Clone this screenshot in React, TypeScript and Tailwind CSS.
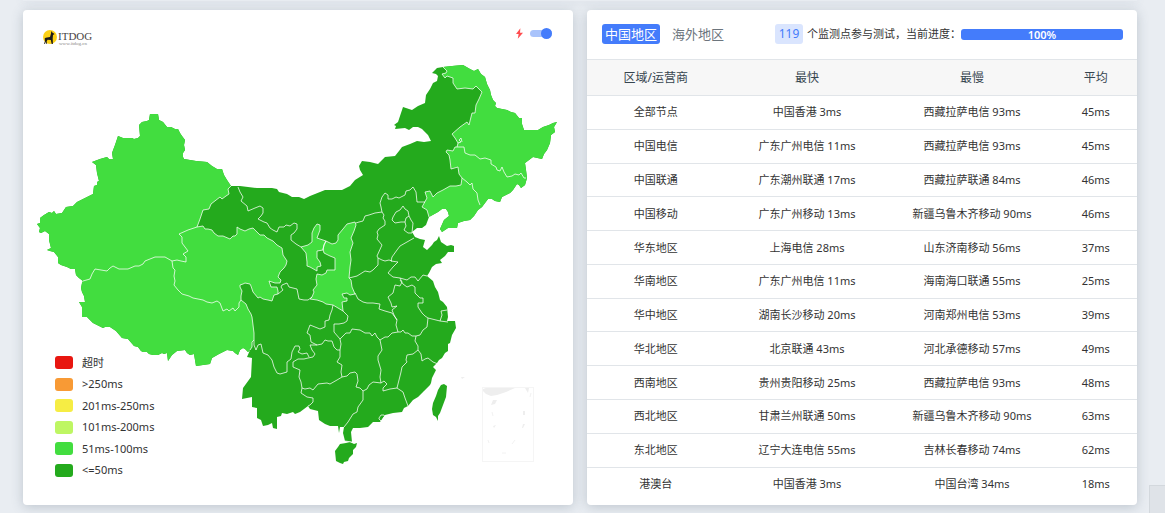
import React from "react";

const legend = [
  { label: "超时", color: "bg-[#e81610]" },
  { label: ">250ms", color: "bg-[#f89a35]" },
  { label: "201ms-250ms", color: "bg-[#f6ed44]" },
  { label: "101ms-200ms", color: "bg-[#bef663]" },
  { label: "51ms-100ms", color: "bg-[#42dd3f]" },
  { label: "<=50ms", color: "bg-[#24aa1d]" },
];

const rows = [
  ["全部节点", "中国香港 3ms", "西藏拉萨电信 93ms", "45ms"],
  ["中国电信", "广东广州电信 11ms", "西藏拉萨电信 93ms", "45ms"],
  ["中国联通", "广东潮州联通 17ms", "西藏拉萨联通 84ms", "46ms"],
  ["中国移动", "广东广州移动 13ms", "新疆乌鲁木齐移动 90ms", "46ms"],
  ["华东地区", "上海电信 28ms", "山东济南移动 56ms", "37ms"],
  ["华南地区", "广东广州电信 11ms", "海南海口联通 55ms", "25ms"],
  ["华中地区", "湖南长沙移动 20ms", "河南郑州电信 53ms", "39ms"],
  ["华北地区", "北京联通 43ms", "河北承德移动 57ms", "49ms"],
  ["西南地区", "贵州贵阳移动 25ms", "西藏拉萨电信 93ms", "48ms"],
  ["西北地区", "甘肃兰州联通 50ms", "新疆乌鲁木齐移动 90ms", "63ms"],
  ["东北地区", "辽宁大连电信 55ms", "吉林长春移动 74ms", "62ms"],
  ["港澳台", "中国香港 3ms", "中国台湾 34ms", "18ms"],
];

// Coast and land frontier, one piece per stretch so the regions can share them
const westCoast =
  "83,281 79,278 76,275 75,269 71,269 67,267 61,265 58,263 58,257 54,252 50,251 47,250 51,248 50,244 49,240 49,234 45,231 41,233 39,232 40,228 37,224 40,223 40,218 44,215 49,212 52,213 54,211 56,214 62,213 66,207 73,206 77,202 85,198 93,194 94,186 97,185 97,182 99,181 97,173 96,165 92,162 100,159 107,157 109,159 113,159 112,153 115,145 118,136 123,138 132,138 134,139 138,138 140,136 139,125 142,122 147,121 149,120 150,114 158,114 159,120 163,122 167,127 171,127 175,129 178,129 180,133 182,136 185,140 184,145 185,150 183,153 183,157 184,159 196,161 207,162 212,166 217,169 222,169 224,175 227,180 231,186";
const northCoast =
  "231,186 240,186 257,188 272,188 277,189 279,192 287,194 292,197 299,197 304,199 310,196 325,190 342,190 350,186 355,180 363,175 360,170 359,166 362,161 370,162 378,164 385,157 395,156 399,151 402,147 410,144 417,141 424,142 431,141 428,135 422,129 418,127 413,127 409,130 405,128 395,129 396,126 394,125 398,122 401,113 403,107 412,110 418,106 425,103 426,95 430,89 433,83 437,81 438,76 436,74 432,73 437,68 443,67";
const northEastCoast =
  "443,67 452,66 463,65 470,69 474,71 478,69 481,74 485,77 487,84 490,90 491,95 493,100 496,103 495,106 497,108 507,110 511,112 515,113 519,118 522,118 522,124 524,130 538,130 543,127 549,125 553,123 557,122 554,127 555,132 551,135 550,143 547,150 544,154 542,159 533,157 525,163 526,170 527,178 525,185 521,188 519,185 517,184 513,190 510,193 502,197 500,202 495,201 492,199 488,199 482,207 478,210 474,216 470,220 464,221 458,223 457,228 448,228 442,232 440,229 444,220 449,216 448,212 446,209 442,209 438,212 429,217";
const eastCoast =
  "429,217 426,225 422,228 417,228 412,232 415,237 420,239 425,240 423,247 427,250 432,245 434,242 437,240 439,236 441,242 447,246 451,245 454,246 454,252 448,252 445,256 440,260 442,263 436,264 432,267 429,273 427,276 433,281 435,287 438,292 440,300 443,302 447,307 448,317 447,321 455,321 456,328 452,335 451,339 450,343 448,344 448,351 445,353 442,358 439,360 437,363 433,367 436,370 432,378 431,383 430,385 424,391 418,397 413,400 408,406 404,408 402,412 393,413 385,415 380,422 373,422 368,427 360,428 353,428 351,432 352,442 345,441 343,433 344,427 340,427 339,433 338,426 330,426 325,424 319,420 318,411 310,409 308,406 300,412 295,414 293,412 290,413 287,414 282,413 281,416 277,417 277,429 273,428 272,423 268,425 263,426 261,420 257,418 257,408 252,407 252,397 247,398 242,399 243,388 251,377 252,358 247,357 250,350";
const tibetCoast =
  "250,350 248,352 245,349 243,348 240,350 238,355 235,353 233,351 227,350 219,354 212,358 210,364 196,366 194,354 190,355 187,353 185,350 177,351 172,355 168,361 167,353 164,354 162,353 158,355 153,355 149,354 147,352 143,352 141,351 138,347 134,346 128,339 122,338 116,331 110,327 105,327 103,328 93,323 87,317 82,317 82,307 79,302 85,302 84,296 82,292 81,288 82,283 83,281";

// Inner edges of the lighter provinces
const xinjiangEast =
  "231,186 228,189 229,194 226,196 222,199 220,197 211,204 209,209 203,210 200,219 197,227";
const qinghaiEast =
  "197,227 203,226 205,229 208,229 212,230 214,233 218,236 223,236 230,239 233,236 235,236 237,234 237,227 240,229 245,231 249,229 253,228 260,235 264,235 267,238 273,241 277,245 282,248 283,255 287,261 286,265 284,268 280,272 278,277 281,280 280,283 275,283 269,281 271,287 274,287 277,287 278,291 278,294 274,295 272,301 268,300 263,299 260,297 258,298 253,292 251,286 250,284 245,283 243,284 240,285 240,287 242,291 241,296 241,300";
const tibetEast = "241,300 246,304 248,309 251,314 252,317 253,325 254,333 254,340 252,342 252,347 250,350";
const northEastInner =
  "429,217 427,210 422,207 427,198 425,192 430,191 433,197 437,193 443,190 450,186 456,186 461,185 462,178 459,174 458,167 451,169 450,160 449,155 446,152 447,150 453,151 455,147 457,147 458,143 455,138 452,134 460,127 467,122 469,125 472,113 475,113 476,105 479,99 482,92 476,86 473,89 465,88 457,89 455,86 453,83 453,78 450,77 447,76 445,78 442,74 446,73 447,71 443,67";
const ningxia =
  "301,247 308,245 312,242 312,233 314,228 317,224 320,225 320,230 317,238 323,240 326,241 324,245 323,250 317,251 317,258 320,262 321,266 317,267 317,271 310,267 307,266 307,262 306,253";
const shaanxi =
  "326,241 332,244 336,243 338,240 338,235 343,229 347,224 351,223 355,222 356,225 354,231 351,238 353,243 350,252 351,260 350,267 349,278 351,280 352,287 355,294 350,295 347,293 342,294 344,298 347,298 347,301 342,302 343,311 338,308 333,305 326,304 323,302 317,300 310,299 312,297 314,292 313,290 317,285 316,279 317,274 322,275 326,273 327,270 335,270 335,258 330,256 324,253 323,249 324,245";

const borders = [
  "83,281 90,279 92,274 95,269 107,271 110,268 113,266 119,269 128,269 135,266 139,266 143,264 145,261 155,257 165,257 172,261",
  "172,261 177,260 181,261 186,262 186,257 183,254 188,251 182,243 182,237 179,234 188,230 197,227",
  "172,261 173,268 175,270 174,276 175,281 174,285 178,290 182,294 189,296 193,298 198,299 203,300 207,302 212,303 217,301 220,303 223,311 227,309 229,311 233,308 235,311 239,307 239,303 241,300",
  "464,147 465,153 470,155 475,155 480,159 485,158 491,160 491,164 496,167 497,170 500,171 502,167 504,172 507,177 512,176 515,174 519,175 521,173 524,178 526,178",
  "457,147 464,147",
  "458,143 461,142 459,140 461,138 462,142",
  "462,178 467,182 470,185 472,183 473,189 477,193 478,200 480,205",
  "238,187 240,192 243,197 241,201 247,206 248,211 255,208 260,206 263,208 263,213 261,216 258,219 264,222 267,223 270,228 273,230 277,232 279,227 284,227 286,225 290,226 294,223 297,224 297,229 294,233 291,235 291,240 296,244 301,247",
  "278,294 283,290 281,287 282,285 287,283 289,287 293,288 297,289 299,299 304,300 308,300 312,297",
  "349,278 357,276 365,271 370,272 373,270 378,265 378,258",
  "378,258 377,256 382,245 377,239 378,235 377,232 379,229 385,225 385,221 383,218 384,215 382,212",
  "356,223 359,222 363,221 365,216 369,215 375,213 382,212",
  "382,212 381,207 380,203 382,197 385,193 388,195 388,199 392,199 396,197 399,198 405,195 406,191 410,190 413,187 416,192 417,202 425,202",
  "393,217 396,212 400,210 403,206 405,209 408,211 409,216 406,218 405,222 401,222 395,223 392,220 393,217",
  "405,222 406,226 404,230 408,233 412,233",
  "409,216 411,220 413,223 412,233",
  "414,238 407,242 400,246 397,250 392,257 391,261 398,262 393,267 388,273 393,277 400,278 407,280 411,277 415,277 418,281 423,275 427,276",
  "378,258 382,260 385,261 389,260 392,261",
  "400,278 402,282 400,286 395,285 393,293 388,297 391,303 392,307 397,306 392,310 394,315 397,320",
  "400,280 403,284 407,287 412,285 415,287 415,293 417,295 420,298 423,298 423,303 418,303 418,307 422,313 425,316 428,318 440,321 448,322",
  "447,310 441,311 442,315 440,321",
  "428,318 427,327 423,330 420,335 416,336",
  "355,293 358,299 363,302 367,303 373,303 380,304 379,309 385,311 392,313 397,320 396,325 398,332",
  "398,332 401,332 403,330 405,333 408,333 412,336 416,336",
  "416,336 415,341 418,346 418,350 421,354 422,361 425,359 428,358 433,362 438,364",
  "418,350 413,354 407,355 406,360 407,362 402,367 401,372 399,380 397,388",
  "397,388 403,392 405,398 408,406",
  "398,332 392,333 388,337 385,337 380,340",
  "380,340 377,337 375,333 372,336 370,333 365,333 360,330 352,329 350,333 346,333 340,339",
  "380,340 382,350 378,356 378,360 381,370 380,377 381,383",
  "381,383 384,381 387,384 383,388 383,391 390,389 397,388",
  "381,383 373,382 369,385 367,389 363,391 360,388 356,387 358,381 357,374 355,372 350,373 347,376 342,377",
  "363,391 363,400 358,407 357,412 353,414 348,422 344,427",
  "340,339 341,344 340,350 340,357 337,362 342,365 341,372 342,377",
  "343,311 348,316 347,321 344,323 339,324 334,324 334,332 340,339",
  "333,305 332,310 330,315 329,320 325,321 325,327 320,329 315,327 310,325 307,333 310,335 311,342 317,345",
  "317,345 322,344 325,340 328,341 332,341 334,347 337,350 340,350",
  "317,345 310,345 312,350 315,354 313,357 308,358 304,359 298,359 293,362 293,367 300,370 299,377 301,382 302,388",
  "295,346 299,346 300,349 298,352 302,354 307,353 309,357",
  "254,340 254,345 256,350 258,345 261,344 263,353 268,355 272,360 274,367 277,373 280,374 287,372 287,362 291,359 292,352 295,346",
  "302,388 305,389 310,388 313,390 318,384 327,383 330,384 337,380 342,377",
  "302,388 301,393 307,397 313,398 313,402 310,405 308,406",
  "345,441 352,442",
];

const ChinaMap = () => {
  return (
    <svg viewBox="23 10 550 495" className="block w-full" role="img" aria-label="ITDOG">
      <g fill="#24aa1d">
        <polygon points={`${westCoast} ${northCoast} ${northEastCoast} ${eastCoast} ${tibetCoast}`} />
        <polygon points="340,444 346,443 350,442 354,444 357,443 356,447 353,450 353,454 349,458 348,461 344,462 343,464 340,463 336,461 335,451 338,447" />
        <polygon points="444,384 447,386 446,397 443,405 440,413 438,416 438,421 436,417 433,415 432,409 433,403 436,396 438,390 441,385" />
      </g>
      <g fill="#42dd3f">
        <polygon points={`${westCoast} ${xinjiangEast} ${qinghaiEast} ${tibetEast} ${tibetCoast}`} />
        <polygon points={`${northEastCoast} ${northEastInner}`} />
        <polygon points={ningxia} />
        <polygon points={shaanxi} />
      </g>
      <g fill="none" stroke="#fff" strokeOpacity="0.75" strokeWidth="1" strokeLinejoin="round">
        {borders.map((line) => (
          <polyline key={line} points={line} />
        ))}
        <polyline points={xinjiangEast} />
        <polyline points={qinghaiEast} />
        <polyline points={tibetEast} />
        <polyline points={northEastInner} />
        <polygon points={ningxia} />
        <polygon points={shaanxi} />
        <path d="M379 418l2-3 3 0 1 2-2 1 1 2-3 1-2-2z" />
      </g>

      {/* South China Sea inset */}
      <rect x="482.500" y="387.500" width="51" height="74" fill="none" stroke="#f5f5f5" />
      <g fill="#eee">
        <path d="M483 389l3-1h29l-9 4-9 3-6 1-5-2-3-3zM525 388h4l-1 5zM493 400h4l-2 4-4 1zM523 411h2v4h-2zM523 424l2 0-2 4-1 0zM493 426l3-1-2 3zM461 377l4 0-3 2z" />
        <path d="M492 412l1 4M488 440l1 3M515 440l-3 4M502 453h4M531 393l-1 4" stroke="#f2f2f2" />
      </g>

      {/* Logo */}
      <circle cx="50" cy="37" r="7" fill="#fcd116" />
      <path
        d="M44 44l1-3-.3-2.500 1-.7 4.300-.8 1-3.500.3-2.500 1 1.500 2.300 1.500-1.600.9-.3 3.600.2 5.500h-1.200l-.9-4-3.200-.3-.9 1.600.2 2.500h-1l-.6-2.300-.5 2.500z"
        fill="#1c1a17"
      />
      <text x="58" y="40" fontSize="11" fill="#4a4545" fontFamily="Liberation Serif, serif">ITDOG</text>
      <text x="59" y="45" fontSize="5" fill="#8a8686" fontFamily="Liberation Serif, serif">www.itdog.cn</text>
    </svg>
  );
};

const App = () => {
  return (
    <div className="min-h-screen bg-[#e9edf2] font-['Noto_Sans','Noto_Sans_CJK_SC',sans-serif] text-[11px] text-[#333]">
      <div className="overflow-hidden pl-[23px] pr-7">
        <div className="h-px shadow-[0_0_10px_rgba(80,100,120,0.45)]"></div>
        <main className="grid grid-cols-2 gap-3.5 pt-[9px] pb-2">
          <section className="relative rounded bg-white shadow-[0_2px_12px_rgba(60,80,100,0.25)]">
            <ChinaMap />

            <label className="absolute top-[18px] right-[21px] flex items-center gap-[7px]">
              <svg viewBox="0 0 8 12" className="h-[11px] w-[7px]" fill="#ff4d4f" aria-hidden="true">
                <path d="M5 0L0 6.500h3L2 12l6-7H4.600z" />
              </svg>
              <input
                type="checkbox"
                defaultChecked
                aria-label="闪电模式"
                className="relative h-[7px] w-[22px] appearance-none rounded-full bg-[#a9c3fb] after:absolute after:-top-[2px] after:right-0 after:size-[11px] after:rounded-full after:bg-[#447cfb]"
              />
            </label>

            <ul className="absolute bottom-6 left-8 grid h-[129px] grid-rows-6">
              {legend.map((item) => (
                <li key={item.label} className="flex items-center gap-[9px]">
                  <span className={`h-[13px] w-[18px] rounded-[3px] ${item.color}`}></span>
                  <span>{item.label}</span>
                </li>
              ))}
            </ul>
          </section>

          <section className="rounded bg-white shadow-[0_2px_12px_rgba(60,80,100,0.25)]">
            <div className="flex h-12 items-center pl-[15px] pr-3.5">
              <button className="h-5 rounded-[3px] bg-[#447cfb] px-[3px] text-[13px] leading-[18px] text-white">
                中国地区
              </button>
              <button className="ml-3 h-5 text-[13px] leading-[18px] text-[#6c757d]">海外地区</button>
              <div className="ml-auto flex items-center">
                <span className="h-5 w-7 rounded-[3px] bg-[#dae5fe] text-center text-xs leading-5 text-[#447cfb]">
                  119
                </span>
                <span className="ml-1 whitespace-nowrap">个监测点参与测试，当前进度：</span>
              </div>
              <div className="h-[11px] w-[162px] rounded-[3px] bg-[#447cfb] text-center font-semibold leading-[11px] text-white">
                100%
              </div>
            </div>

            <table className="mt-px h-[441px] w-full table-fixed border-collapse text-center leading-4">
              <colgroup>
                <col className="w-[25%]" />
                <col className="w-[30%]" />
                <col className="w-[30%]" />
                <col className="w-[15%]" />
              </colgroup>
              <thead>
                <tr className="h-9 border-y border-[#e1e5e9] bg-[#f7f7f7] text-xs text-[#36454f]">
                  <th className="font-normal">区域/运营商</th>
                  <th className="font-normal">最快</th>
                  <th className="font-normal">最慢</th>
                  <th className="font-normal">平均</th>
                </tr>
              </thead>
              <tbody>
                {rows.map((row) => (
                  <tr key={row[0]} className="border-b border-[#e1e5e9] last:border-b-0">
                    {row.map((cell, i) => (
                      <td key={i}>{cell}</td>
                    ))}
                  </tr>
                ))}
              </tbody>
            </table>
          </section>
        </main>
      </div>

      {/* Back to top handle, half hidden at the window's corner */}
      <div className="fixed right-0 bottom-0 h-7 w-4 border-t border-l border-[#d3d8dd] bg-[#dfe3e8]"></div>
    </div>
  );
};

export default App;
